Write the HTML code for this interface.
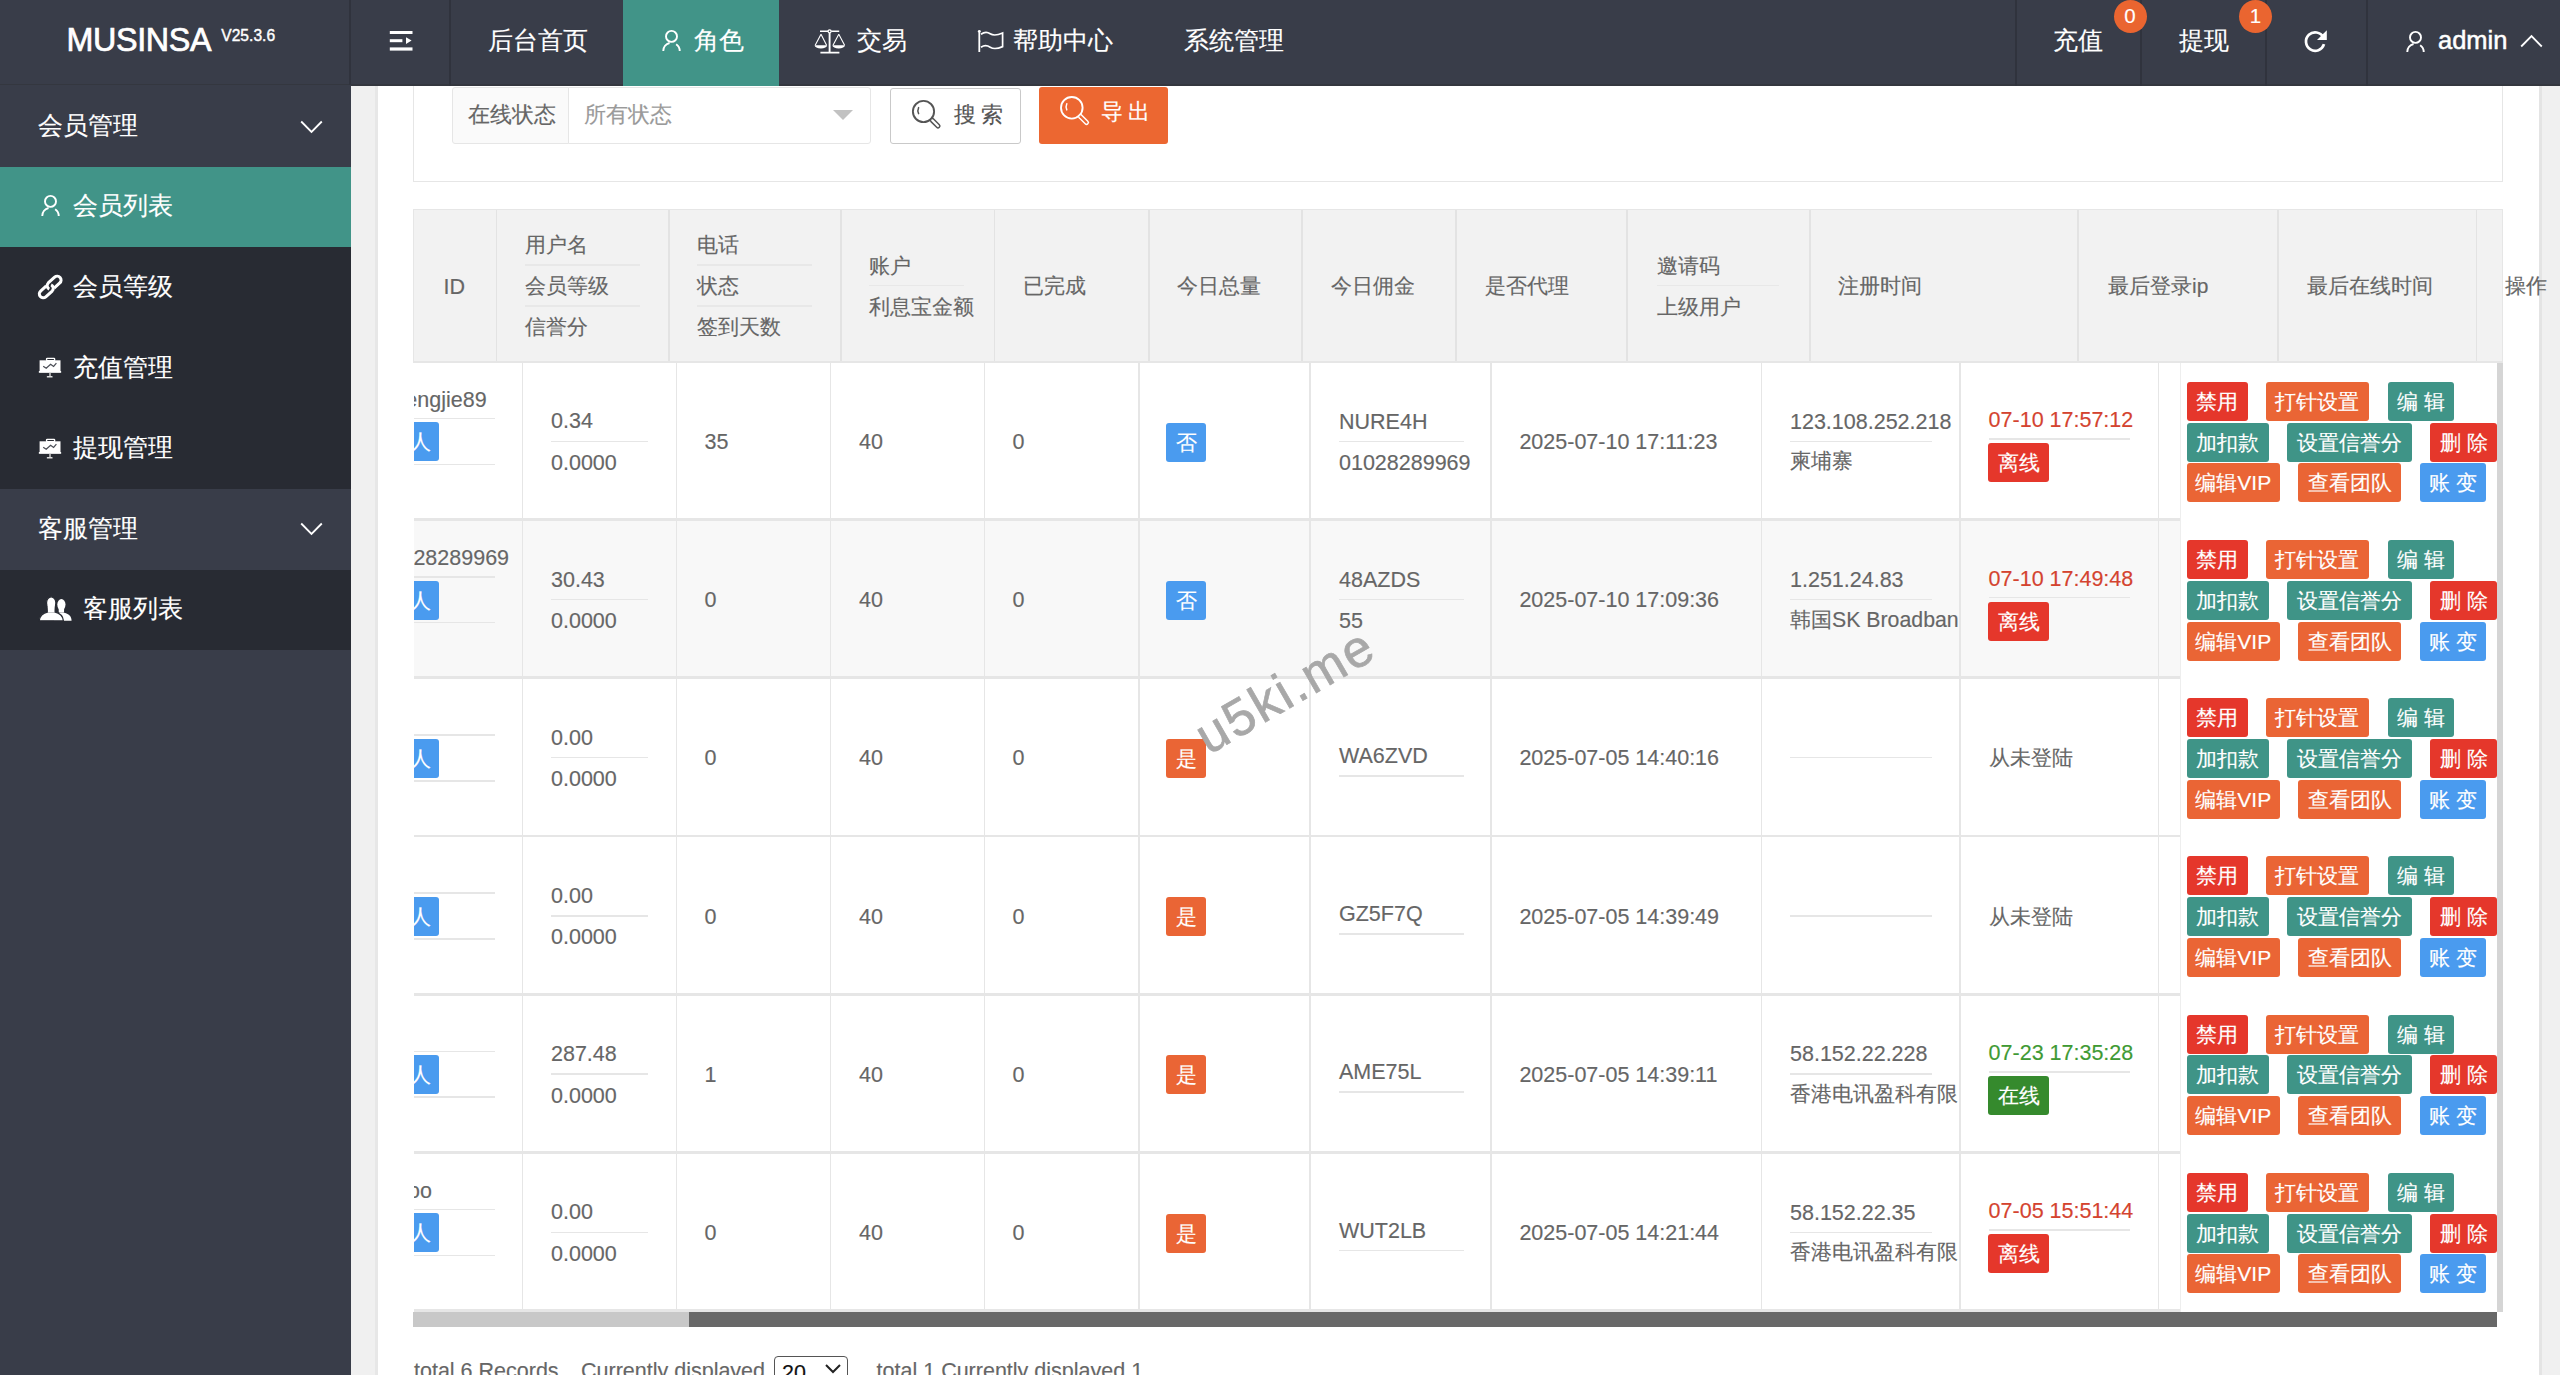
<!DOCTYPE html><html><head><meta charset="utf-8"><style>
html,body{margin:0;padding:0}
body{width:2560px;height:1375px;overflow:hidden;position:relative;background:#fff;font-family:'Liberation Sans',sans-serif}
.t{position:absolute;white-space:nowrap;-webkit-text-stroke:0.15px}
.r{position:absolute}
svg{position:absolute;overflow:visible}
.btn{position:absolute;height:39px;line-height:40px;-webkit-text-stroke:0.15px;font-size:21px;color:#fff;border-radius:3px;text-align:center;white-space:nowrap}
</style></head><body>
<div class="r" style="left:351.00px;top:85.00px;width:2209.00px;height:1290.00px;background:#f0f0f0;"></div>
<div class="r" style="left:378.00px;top:85.00px;width:2161.00px;height:1290.00px;background:#fff;"></div>
<div class="r" style="left:375.00px;top:85.00px;width:3.00px;height:1290.00px;background:#e7e7e7;"></div>
<div class="r" style="left:2539.00px;top:85.00px;width:3.00px;height:1290.00px;background:#e4e4e4;"></div>
<div class="r" style="left:413.00px;top:40.00px;width:2090.00px;height:141.50px;background:#fff;box-sizing:border-box;border:1.5px solid #e6e6e6;"></div>
<div class="r" style="left:452.00px;top:87.00px;width:117.00px;height:56.50px;background:#fafafa;box-sizing:border-box;border:1.5px solid #e6e6e6;border-radius:3px 0 0 3px;"></div>
<div class="r" style="left:567.50px;top:87.00px;width:303.50px;height:56.50px;background:#fff;box-sizing:border-box;border:1.5px solid #e6e6e6;border-radius:0 3px 3px 0;"></div>
<div class="t" style="left:468.0px;top:104.38px;font-size:21.6px;line-height:21.6px;color:#666;">在线状态</div>
<div class="t" style="left:584.0px;top:104.38px;font-size:21.6px;line-height:21.6px;color:#9a9a9a;">所有状态</div>
<svg style="left:833px;top:110px" width="20" height="10"><path d="M0 0 L20 0 L10 10 Z" fill="#c2c2c2"/></svg>
<div class="r" style="left:890.00px;top:87.50px;width:131.00px;height:56.00px;background:#fff;box-sizing:border-box;border:1.5px solid #c9c9c9;border-radius:3px;"></div>
<svg style="left:911px;top:99px" width="30" height="30" viewBox="0 0 30 30"><circle cx="12.5" cy="12.5" r="10.6" fill="none" stroke="#555" stroke-width="1.9"/><path d="M7.6 8.6 Q6.2 11.5 7.6 14.6" fill="none" stroke="#555" stroke-width="1.5" stroke-linecap="round"/><path d="M21.3 21.3 L27 27" stroke="#555" stroke-width="5.2" stroke-linecap="round"/><path d="M21.3 21.3 L27 27" stroke="#fff" stroke-width="2.2" stroke-linecap="round"/></svg>
<div class="t" style="left:953.5px;top:104.38px;font-size:21.6px;line-height:21.6px;color:#555;">搜 索</div>
<div class="r" style="left:1039.00px;top:87.00px;width:129.00px;height:56.50px;background:#ec6731;border-radius:3px;"></div>
<svg style="left:1059px;top:95px" width="31" height="31" viewBox="0 0 31 31"><circle cx="12.8" cy="12.8" r="10.8" fill="none" stroke="#fff" stroke-width="1.9"/><path d="M7.8 8.8 Q6.4 11.8 7.8 14.9" fill="none" stroke="#fff" stroke-width="1.5" stroke-linecap="round"/><path d="M21.5 21.5 L27.5 27.5" stroke="#fff" stroke-width="5.2" stroke-linecap="round"/><path d="M21.5 21.5 L27.5 27.5" stroke="#ec6731" stroke-width="2.2" stroke-linecap="round"/></svg>
<div class="t" style="left:1100.5px;top:101.38px;font-size:21.6px;line-height:21.6px;color:#fff;">导 出</div>
<div class="r" style="left:413.00px;top:209.00px;width:2090.00px;height:154.00px;background:#f2f2f2;box-sizing:border-box;border:1.5px solid #e6e6e6;border-bottom:2.5px solid #e6e6e6;"></div>
<div class="r" style="left:495.75px;top:210.00px;width:1.50px;height:151.00px;background:#e3e3e3;"></div>
<div class="r" style="left:668.25px;top:210.00px;width:1.50px;height:151.00px;background:#e3e3e3;"></div>
<div class="r" style="left:840.25px;top:210.00px;width:1.50px;height:151.00px;background:#e3e3e3;"></div>
<div class="r" style="left:993.75px;top:210.00px;width:1.50px;height:151.00px;background:#e3e3e3;"></div>
<div class="r" style="left:1148.25px;top:210.00px;width:1.50px;height:151.00px;background:#e3e3e3;"></div>
<div class="r" style="left:1301.25px;top:210.00px;width:1.50px;height:151.00px;background:#e3e3e3;"></div>
<div class="r" style="left:1455.25px;top:210.00px;width:1.50px;height:151.00px;background:#e3e3e3;"></div>
<div class="r" style="left:1626.25px;top:210.00px;width:1.50px;height:151.00px;background:#e3e3e3;"></div>
<div class="r" style="left:1809.25px;top:210.00px;width:1.50px;height:151.00px;background:#e3e3e3;"></div>
<div class="r" style="left:2077.25px;top:210.00px;width:1.50px;height:151.00px;background:#e3e3e3;"></div>
<div class="r" style="left:2277.25px;top:210.00px;width:1.50px;height:151.00px;background:#e3e3e3;"></div>
<div class="r" style="left:2475.75px;top:210.00px;width:1.50px;height:151.00px;background:#e3e3e3;"></div>
<div class="t" style="left:443.5px;top:276.74px;font-size:21.5px;line-height:21.5px;color:#666;">ID</div>
<div class="t" style="left:525.0px;top:233.69px;font-size:21px;line-height:21px;color:#666;">用户名</div>
<div class="t" style="left:525.0px;top:275.19px;font-size:21px;line-height:21px;color:#666;">会员等级</div>
<div class="t" style="left:525.0px;top:316.19px;font-size:21px;line-height:21px;color:#666;">信誉分</div>
<div class="r" style="left:525.00px;top:264.25px;width:115.00px;height:1.25px;background:#e8e8e8;"></div>
<div class="r" style="left:525.00px;top:305.25px;width:115.00px;height:1.25px;background:#e8e8e8;"></div>
<div class="t" style="left:697.0px;top:233.69px;font-size:21px;line-height:21px;color:#666;">电话</div>
<div class="t" style="left:697.0px;top:275.19px;font-size:21px;line-height:21px;color:#666;">状态</div>
<div class="t" style="left:697.0px;top:316.19px;font-size:21px;line-height:21px;color:#666;">签到天数</div>
<div class="r" style="left:697.00px;top:264.25px;width:115.00px;height:1.25px;background:#e8e8e8;"></div>
<div class="r" style="left:697.00px;top:305.25px;width:115.00px;height:1.25px;background:#e8e8e8;"></div>
<div class="t" style="left:869.0px;top:254.69px;font-size:21px;line-height:21px;color:#666;">账户</div>
<div class="t" style="left:869.0px;top:295.69px;font-size:21px;line-height:21px;color:#666;">利息宝金额</div>
<div class="r" style="left:869.00px;top:284.75px;width:95.00px;height:1.25px;background:#e8e8e8;"></div>
<div class="t" style="left:1023.0px;top:275.19px;font-size:21px;line-height:21px;color:#666;">已完成</div>
<div class="t" style="left:1177.0px;top:275.19px;font-size:21px;line-height:21px;color:#666;">今日总量</div>
<div class="t" style="left:1331.0px;top:275.19px;font-size:21px;line-height:21px;color:#666;">今日佣金</div>
<div class="t" style="left:1485.0px;top:275.19px;font-size:21px;line-height:21px;color:#666;">是否代理</div>
<div class="t" style="left:1657.0px;top:254.69px;font-size:21px;line-height:21px;color:#666;">邀请码</div>
<div class="t" style="left:1657.0px;top:295.69px;font-size:21px;line-height:21px;color:#666;">上级用户</div>
<div class="r" style="left:1657.00px;top:284.75px;width:122.00px;height:1.25px;background:#e8e8e8;"></div>
<div class="t" style="left:1838.0px;top:275.19px;font-size:21px;line-height:21px;color:#666;">注册时间</div>
<div class="t" style="left:2108.0px;top:275.19px;font-size:21px;line-height:21px;color:#666;">最后登录ip</div>
<div class="t" style="left:2307.0px;top:275.19px;font-size:21px;line-height:21px;color:#666;">最后在线时间</div>
<div class="t" style="left:2505.0px;top:275.19px;font-size:21px;line-height:21px;color:#666;">操作</div>
<div style="position:absolute;left:414px;top:363px;width:1766px;height:949px;overflow:hidden">
<div class="r" style="left:0.00px;top:155.20px;width:1766.00px;height:2.80px;background:#e6e6e6;"></div>
<div class="t" style="left:-8.7px;top:26.54px;font-size:21.5px;line-height:21.5px;color:#666;">engjie89</div>
<div class="r" style="left:0.00px;top:54.80px;width:80.50px;height:1.50px;background:#e6e6e6;"></div>
<div class="btn" style="left:-114.0px;top:59.30px;width:130.8px;padding-right:8.5px;text-align:right;background:#4a9bef">普通人</div>
<div class="r" style="left:0.00px;top:100.60px;width:80.50px;height:1.50px;background:#e6e6e6;"></div>
<div class="t" style="left:137.0px;top:48.34px;font-size:21.5px;line-height:21.5px;color:#666;">0.34</div>
<div class="r" style="left:137.00px;top:77.50px;width:97.00px;height:1.50px;background:#e6e6e6;"></div>
<div class="t" style="left:137.0px;top:89.73px;font-size:21.5px;line-height:21.5px;color:#666;">0.0000</div>
<div class="t" style="left:290.5px;top:69.04px;font-size:21.5px;line-height:21.5px;color:#666;">35</div>
<div class="t" style="left:445.0px;top:69.04px;font-size:21.5px;line-height:21.5px;color:#666;">40</div>
<div class="t" style="left:598.5px;top:69.04px;font-size:21.5px;line-height:21.5px;color:#666;">0</div>
<div class="btn" style="left:752.0px;top:59.50px;width:40px;background:#4a9bef">否</div>
<div class="t" style="left:925.0px;top:48.54px;font-size:21.5px;line-height:21.5px;color:#666;">NURE4H</div>
<div class="r" style="left:925.00px;top:77.50px;width:124.50px;height:1.50px;background:#e6e6e6;"></div>
<div class="t" style="left:925.0px;top:89.84px;font-size:21.5px;line-height:21.5px;color:#666;">01028289969</div>
<div class="t" style="left:1105.4px;top:69.04px;font-size:21.5px;line-height:21.5px;color:#666;">2025-07-10 17:11:23</div>
<div class="t" style="left:1376.0px;top:48.54px;font-size:21.5px;line-height:21.5px;color:#666;">123.108.252.218</div>
<div class="r" style="left:1376.00px;top:77.50px;width:142.00px;height:1.50px;background:#e6e6e6;"></div>
<div style="position:absolute;left:1376px;top:78.30000000000001px;width:168.5999999999999px;height:40px;overflow:hidden">
<div class="t" style="left:0.0px;top:10.04px;font-size:21.3px;line-height:21.3px;color:#666;">柬埔寨</div>
</div>
<div class="t" style="left:1574.6px;top:47.34px;font-size:21.5px;line-height:21.5px;color:#d4432f;">07-10 17:57:12</div>
<div class="r" style="left:1574.60px;top:75.30px;width:141.40px;height:1.50px;background:#e6e6e6;"></div>
<div class="btn" style="left:1574.0px;top:80.30px;width:61px;background:#e5372b">离线</div>
<div class="r" style="left:0.00px;top:158.20px;width:1766.00px;height:155.70px;background:#f8f8f8;"></div>
<div class="r" style="left:0.00px;top:313.40px;width:1766.00px;height:2.80px;background:#e6e6e6;"></div>
<div class="t" style="left:-0.6px;top:184.73px;font-size:21.5px;line-height:21.5px;color:#666;">28289969</div>
<div class="r" style="left:0.00px;top:213.00px;width:80.50px;height:1.50px;background:#e6e6e6;"></div>
<div class="btn" style="left:-114.0px;top:217.50px;width:130.8px;padding-right:8.5px;text-align:right;background:#4a9bef">普通人</div>
<div class="r" style="left:0.00px;top:258.80px;width:80.50px;height:1.50px;background:#e6e6e6;"></div>
<div class="t" style="left:137.0px;top:206.53px;font-size:21.5px;line-height:21.5px;color:#666;">30.43</div>
<div class="r" style="left:137.00px;top:235.70px;width:97.00px;height:1.50px;background:#e6e6e6;"></div>
<div class="t" style="left:137.0px;top:247.94px;font-size:21.5px;line-height:21.5px;color:#666;">0.0000</div>
<div class="t" style="left:290.5px;top:227.23px;font-size:21.5px;line-height:21.5px;color:#666;">0</div>
<div class="t" style="left:445.0px;top:227.23px;font-size:21.5px;line-height:21.5px;color:#666;">40</div>
<div class="t" style="left:598.5px;top:227.23px;font-size:21.5px;line-height:21.5px;color:#666;">0</div>
<div class="btn" style="left:752.0px;top:217.70px;width:40px;background:#4a9bef">否</div>
<div class="t" style="left:925.0px;top:206.73px;font-size:21.5px;line-height:21.5px;color:#666;">48AZDS</div>
<div class="r" style="left:925.00px;top:235.70px;width:124.50px;height:1.50px;background:#e6e6e6;"></div>
<div class="t" style="left:925.0px;top:248.03px;font-size:21.5px;line-height:21.5px;color:#666;">55</div>
<div class="t" style="left:1105.4px;top:227.23px;font-size:21.5px;line-height:21.5px;color:#666;">2025-07-10 17:09:36</div>
<div class="t" style="left:1376.0px;top:206.73px;font-size:21.5px;line-height:21.5px;color:#666;">1.251.24.83</div>
<div class="r" style="left:1376.00px;top:235.70px;width:142.00px;height:1.50px;background:#e6e6e6;"></div>
<div style="position:absolute;left:1376px;top:236.5px;width:168.5999999999999px;height:40px;overflow:hidden">
<div class="t" style="left:0.0px;top:10.04px;font-size:21.3px;line-height:21.3px;color:#666;">韩国SK Broadband</div>
</div>
<div class="t" style="left:1574.6px;top:205.53px;font-size:21.5px;line-height:21.5px;color:#d4432f;">07-10 17:49:48</div>
<div class="r" style="left:1574.60px;top:233.50px;width:141.40px;height:1.50px;background:#e6e6e6;"></div>
<div class="btn" style="left:1574.0px;top:238.50px;width:61px;background:#e5372b">离线</div>
<div class="r" style="left:0.00px;top:471.60px;width:1766.00px;height:2.80px;background:#e6e6e6;"></div>
<div class="r" style="left:0.00px;top:371.20px;width:80.50px;height:1.50px;background:#e6e6e6;"></div>
<div class="btn" style="left:-114.0px;top:375.70px;width:130.8px;padding-right:8.5px;text-align:right;background:#4a9bef">普通人</div>
<div class="r" style="left:0.00px;top:417.00px;width:80.50px;height:1.50px;background:#e6e6e6;"></div>
<div class="t" style="left:137.0px;top:364.74px;font-size:21.5px;line-height:21.5px;color:#666;">0.00</div>
<div class="r" style="left:137.00px;top:393.90px;width:97.00px;height:1.50px;background:#e6e6e6;"></div>
<div class="t" style="left:137.0px;top:406.14px;font-size:21.5px;line-height:21.5px;color:#666;">0.0000</div>
<div class="t" style="left:290.5px;top:385.44px;font-size:21.5px;line-height:21.5px;color:#666;">0</div>
<div class="t" style="left:445.0px;top:385.44px;font-size:21.5px;line-height:21.5px;color:#666;">40</div>
<div class="t" style="left:598.5px;top:385.44px;font-size:21.5px;line-height:21.5px;color:#666;">0</div>
<div class="btn" style="left:752.0px;top:375.90px;width:40px;background:#ea6535">是</div>
<div class="t" style="left:925.0px;top:382.94px;font-size:21.5px;line-height:21.5px;color:#666;">WA6ZVD</div>
<div class="r" style="left:925.00px;top:412.00px;width:124.50px;height:1.50px;background:#e6e6e6;"></div>
<div class="t" style="left:1105.4px;top:385.44px;font-size:21.5px;line-height:21.5px;color:#666;">2025-07-05 14:40:16</div>
<div class="r" style="left:1376.00px;top:393.90px;width:142.00px;height:1.50px;background:#e6e6e6;"></div>
<div class="t" style="left:1575.0px;top:384.39px;font-size:21px;line-height:21px;color:#666;">从未登陆</div>
<div class="r" style="left:0.00px;top:629.80px;width:1766.00px;height:2.80px;background:#e6e6e6;"></div>
<div class="r" style="left:0.00px;top:529.40px;width:80.50px;height:1.50px;background:#e6e6e6;"></div>
<div class="btn" style="left:-114.0px;top:533.90px;width:130.8px;padding-right:8.5px;text-align:right;background:#4a9bef">普通人</div>
<div class="r" style="left:0.00px;top:575.20px;width:80.50px;height:1.50px;background:#e6e6e6;"></div>
<div class="t" style="left:137.0px;top:522.93px;font-size:21.5px;line-height:21.5px;color:#666;">0.00</div>
<div class="r" style="left:137.00px;top:552.10px;width:97.00px;height:1.50px;background:#e6e6e6;"></div>
<div class="t" style="left:137.0px;top:564.34px;font-size:21.5px;line-height:21.5px;color:#666;">0.0000</div>
<div class="t" style="left:290.5px;top:543.63px;font-size:21.5px;line-height:21.5px;color:#666;">0</div>
<div class="t" style="left:445.0px;top:543.63px;font-size:21.5px;line-height:21.5px;color:#666;">40</div>
<div class="t" style="left:598.5px;top:543.63px;font-size:21.5px;line-height:21.5px;color:#666;">0</div>
<div class="btn" style="left:752.0px;top:534.10px;width:40px;background:#ea6535">是</div>
<div class="t" style="left:925.0px;top:541.13px;font-size:21.5px;line-height:21.5px;color:#666;">GZ5F7Q</div>
<div class="r" style="left:925.00px;top:570.20px;width:124.50px;height:1.50px;background:#e6e6e6;"></div>
<div class="t" style="left:1105.4px;top:543.63px;font-size:21.5px;line-height:21.5px;color:#666;">2025-07-05 14:39:49</div>
<div class="r" style="left:1376.00px;top:552.10px;width:142.00px;height:1.50px;background:#e6e6e6;"></div>
<div class="t" style="left:1575.0px;top:542.59px;font-size:21px;line-height:21px;color:#666;">从未登陆</div>
<div class="r" style="left:0.00px;top:788.00px;width:1766.00px;height:2.80px;background:#e6e6e6;"></div>
<div class="r" style="left:0.00px;top:687.60px;width:80.50px;height:1.50px;background:#e6e6e6;"></div>
<div class="btn" style="left:-114.0px;top:692.10px;width:130.8px;padding-right:8.5px;text-align:right;background:#4a9bef">普通人</div>
<div class="r" style="left:0.00px;top:733.40px;width:80.50px;height:1.50px;background:#e6e6e6;"></div>
<div class="t" style="left:137.0px;top:681.13px;font-size:21.5px;line-height:21.5px;color:#666;">287.48</div>
<div class="r" style="left:137.00px;top:710.30px;width:97.00px;height:1.50px;background:#e6e6e6;"></div>
<div class="t" style="left:137.0px;top:722.53px;font-size:21.5px;line-height:21.5px;color:#666;">0.0000</div>
<div class="t" style="left:290.5px;top:701.83px;font-size:21.5px;line-height:21.5px;color:#666;">1</div>
<div class="t" style="left:445.0px;top:701.83px;font-size:21.5px;line-height:21.5px;color:#666;">40</div>
<div class="t" style="left:598.5px;top:701.83px;font-size:21.5px;line-height:21.5px;color:#666;">0</div>
<div class="btn" style="left:752.0px;top:692.30px;width:40px;background:#ea6535">是</div>
<div class="t" style="left:925.0px;top:699.33px;font-size:21.5px;line-height:21.5px;color:#666;">AME75L</div>
<div class="r" style="left:925.00px;top:728.40px;width:124.50px;height:1.50px;background:#e6e6e6;"></div>
<div class="t" style="left:1105.4px;top:701.83px;font-size:21.5px;line-height:21.5px;color:#666;">2025-07-05 14:39:11</div>
<div class="t" style="left:1376.0px;top:681.33px;font-size:21.5px;line-height:21.5px;color:#666;">58.152.22.228</div>
<div class="r" style="left:1376.00px;top:710.30px;width:142.00px;height:1.50px;background:#e6e6e6;"></div>
<div style="position:absolute;left:1376px;top:711.0999999999999px;width:168.5999999999999px;height:40px;overflow:hidden">
<div class="t" style="left:0.0px;top:10.04px;font-size:21.3px;line-height:21.3px;color:#666;">香港电讯盈科有限</div>
</div>
<div class="t" style="left:1574.6px;top:680.13px;font-size:21.5px;line-height:21.5px;color:#3f9a34;">07-23 17:35:28</div>
<div class="r" style="left:1574.60px;top:708.10px;width:141.40px;height:1.50px;background:#e6e6e6;"></div>
<div class="btn" style="left:1574.0px;top:713.10px;width:61px;background:#358a2d">在线</div>
<div class="r" style="left:0.00px;top:946.20px;width:1766.00px;height:2.80px;background:#e6e6e6;"></div>
<div class="t" style="left:-5.9px;top:817.53px;font-size:21.5px;line-height:21.5px;color:#666;">oo</div>
<div class="r" style="left:0.00px;top:845.80px;width:80.50px;height:1.50px;background:#e6e6e6;"></div>
<div class="btn" style="left:-114.0px;top:850.30px;width:130.8px;padding-right:8.5px;text-align:right;background:#4a9bef">普通人</div>
<div class="r" style="left:0.00px;top:891.60px;width:80.50px;height:1.50px;background:#e6e6e6;"></div>
<div class="t" style="left:137.0px;top:839.33px;font-size:21.5px;line-height:21.5px;color:#666;">0.00</div>
<div class="r" style="left:137.00px;top:868.50px;width:97.00px;height:1.50px;background:#e6e6e6;"></div>
<div class="t" style="left:137.0px;top:880.74px;font-size:21.5px;line-height:21.5px;color:#666;">0.0000</div>
<div class="t" style="left:290.5px;top:860.03px;font-size:21.5px;line-height:21.5px;color:#666;">0</div>
<div class="t" style="left:445.0px;top:860.03px;font-size:21.5px;line-height:21.5px;color:#666;">40</div>
<div class="t" style="left:598.5px;top:860.03px;font-size:21.5px;line-height:21.5px;color:#666;">0</div>
<div class="btn" style="left:752.0px;top:850.50px;width:40px;background:#ea6535">是</div>
<div class="t" style="left:925.0px;top:857.53px;font-size:21.5px;line-height:21.5px;color:#666;">WUT2LB</div>
<div class="r" style="left:925.00px;top:886.60px;width:124.50px;height:1.50px;background:#e6e6e6;"></div>
<div class="t" style="left:1105.4px;top:860.03px;font-size:21.5px;line-height:21.5px;color:#666;">2025-07-05 14:21:44</div>
<div class="t" style="left:1376.0px;top:839.53px;font-size:21.5px;line-height:21.5px;color:#666;">58.152.22.35</div>
<div class="r" style="left:1376.00px;top:868.50px;width:142.00px;height:1.50px;background:#e6e6e6;"></div>
<div style="position:absolute;left:1376px;top:869.3px;width:168.5999999999999px;height:40px;overflow:hidden">
<div class="t" style="left:0.0px;top:10.04px;font-size:21.3px;line-height:21.3px;color:#666;">香港电讯盈科有限</div>
</div>
<div class="t" style="left:1574.6px;top:838.33px;font-size:21.5px;line-height:21.5px;color:#d4432f;">07-05 15:51:44</div>
<div class="r" style="left:1574.60px;top:866.30px;width:141.40px;height:1.50px;background:#e6e6e6;"></div>
<div class="btn" style="left:1574.0px;top:871.30px;width:61px;background:#e5372b">离线</div>
<div class="r" style="left:107.95px;top:0.00px;width:1.50px;height:949.00px;background:#e6e6e6;"></div>
<div class="r" style="left:261.85px;top:0.00px;width:1.50px;height:949.00px;background:#e6e6e6;"></div>
<div class="r" style="left:415.85px;top:0.00px;width:1.50px;height:949.00px;background:#e6e6e6;"></div>
<div class="r" style="left:569.75px;top:0.00px;width:1.50px;height:949.00px;background:#e6e6e6;"></div>
<div class="r" style="left:724.05px;top:0.00px;width:1.50px;height:949.00px;background:#e6e6e6;"></div>
<div class="r" style="left:895.25px;top:0.00px;width:1.50px;height:949.00px;background:#e6e6e6;"></div>
<div class="r" style="left:1076.05px;top:0.00px;width:1.50px;height:949.00px;background:#e6e6e6;"></div>
<div class="r" style="left:1346.65px;top:0.00px;width:1.50px;height:949.00px;background:#e6e6e6;"></div>
<div class="r" style="left:1545.45px;top:0.00px;width:1.50px;height:949.00px;background:#e6e6e6;"></div>
<div class="r" style="left:1743.85px;top:0.00px;width:1.50px;height:949.00px;background:#e6e6e6;"></div>
</div>
<div class="r" style="left:2180.00px;top:363.00px;width:323.00px;height:949.00px;background:#fff;"></div>
<div class="r" style="left:2180.00px;top:363.00px;width:1.00px;height:949.00px;background:#eeeeee;"></div>
<div class="r" style="left:2497.00px;top:363.00px;width:6.00px;height:949.00px;background:#d5d5d5;"></div>
<div class="btn" style="left:2187px;top:381.80px;width:60.6px;background:#e5372b">禁用</div>
<div class="btn" style="left:2265.7px;top:381.80px;width:103px;background:#ea6535">打针设置</div>
<div class="btn" style="left:2387.6px;top:381.80px;width:66.4px;background:#3f9487">编 辑</div>
<div class="btn" style="left:2187px;top:422.60px;width:81.6px;background:#3f9487">加扣款</div>
<div class="btn" style="left:2286.8px;top:422.60px;width:125px;background:#3f9487">设置信誉分</div>
<div class="btn" style="left:2430.4px;top:422.60px;width:66.6px;background:#e5372b">删 除</div>
<div class="btn" style="left:2187px;top:463.40px;width:92.5px;background:#ea6535">编辑VIP</div>
<div class="btn" style="left:2298px;top:463.40px;width:103.4px;background:#ea6535">查看团队</div>
<div class="btn" style="left:2419.5px;top:463.40px;width:66.5px;background:#4a9bef">账 变</div>
<div class="btn" style="left:2187px;top:540.00px;width:60.6px;background:#e5372b">禁用</div>
<div class="btn" style="left:2265.7px;top:540.00px;width:103px;background:#ea6535">打针设置</div>
<div class="btn" style="left:2387.6px;top:540.00px;width:66.4px;background:#3f9487">编 辑</div>
<div class="btn" style="left:2187px;top:580.80px;width:81.6px;background:#3f9487">加扣款</div>
<div class="btn" style="left:2286.8px;top:580.80px;width:125px;background:#3f9487">设置信誉分</div>
<div class="btn" style="left:2430.4px;top:580.80px;width:66.6px;background:#e5372b">删 除</div>
<div class="btn" style="left:2187px;top:621.60px;width:92.5px;background:#ea6535">编辑VIP</div>
<div class="btn" style="left:2298px;top:621.60px;width:103.4px;background:#ea6535">查看团队</div>
<div class="btn" style="left:2419.5px;top:621.60px;width:66.5px;background:#4a9bef">账 变</div>
<div class="btn" style="left:2187px;top:698.20px;width:60.6px;background:#e5372b">禁用</div>
<div class="btn" style="left:2265.7px;top:698.20px;width:103px;background:#ea6535">打针设置</div>
<div class="btn" style="left:2387.6px;top:698.20px;width:66.4px;background:#3f9487">编 辑</div>
<div class="btn" style="left:2187px;top:739.00px;width:81.6px;background:#3f9487">加扣款</div>
<div class="btn" style="left:2286.8px;top:739.00px;width:125px;background:#3f9487">设置信誉分</div>
<div class="btn" style="left:2430.4px;top:739.00px;width:66.6px;background:#e5372b">删 除</div>
<div class="btn" style="left:2187px;top:779.80px;width:92.5px;background:#ea6535">编辑VIP</div>
<div class="btn" style="left:2298px;top:779.80px;width:103.4px;background:#ea6535">查看团队</div>
<div class="btn" style="left:2419.5px;top:779.80px;width:66.5px;background:#4a9bef">账 变</div>
<div class="btn" style="left:2187px;top:856.40px;width:60.6px;background:#e5372b">禁用</div>
<div class="btn" style="left:2265.7px;top:856.40px;width:103px;background:#ea6535">打针设置</div>
<div class="btn" style="left:2387.6px;top:856.40px;width:66.4px;background:#3f9487">编 辑</div>
<div class="btn" style="left:2187px;top:897.20px;width:81.6px;background:#3f9487">加扣款</div>
<div class="btn" style="left:2286.8px;top:897.20px;width:125px;background:#3f9487">设置信誉分</div>
<div class="btn" style="left:2430.4px;top:897.20px;width:66.6px;background:#e5372b">删 除</div>
<div class="btn" style="left:2187px;top:938.00px;width:92.5px;background:#ea6535">编辑VIP</div>
<div class="btn" style="left:2298px;top:938.00px;width:103.4px;background:#ea6535">查看团队</div>
<div class="btn" style="left:2419.5px;top:938.00px;width:66.5px;background:#4a9bef">账 变</div>
<div class="btn" style="left:2187px;top:1014.60px;width:60.6px;background:#e5372b">禁用</div>
<div class="btn" style="left:2265.7px;top:1014.60px;width:103px;background:#ea6535">打针设置</div>
<div class="btn" style="left:2387.6px;top:1014.60px;width:66.4px;background:#3f9487">编 辑</div>
<div class="btn" style="left:2187px;top:1055.40px;width:81.6px;background:#3f9487">加扣款</div>
<div class="btn" style="left:2286.8px;top:1055.40px;width:125px;background:#3f9487">设置信誉分</div>
<div class="btn" style="left:2430.4px;top:1055.40px;width:66.6px;background:#e5372b">删 除</div>
<div class="btn" style="left:2187px;top:1096.20px;width:92.5px;background:#ea6535">编辑VIP</div>
<div class="btn" style="left:2298px;top:1096.20px;width:103.4px;background:#ea6535">查看团队</div>
<div class="btn" style="left:2419.5px;top:1096.20px;width:66.5px;background:#4a9bef">账 变</div>
<div class="btn" style="left:2187px;top:1172.80px;width:60.6px;background:#e5372b">禁用</div>
<div class="btn" style="left:2265.7px;top:1172.80px;width:103px;background:#ea6535">打针设置</div>
<div class="btn" style="left:2387.6px;top:1172.80px;width:66.4px;background:#3f9487">编 辑</div>
<div class="btn" style="left:2187px;top:1213.60px;width:81.6px;background:#3f9487">加扣款</div>
<div class="btn" style="left:2286.8px;top:1213.60px;width:125px;background:#3f9487">设置信誉分</div>
<div class="btn" style="left:2430.4px;top:1213.60px;width:66.6px;background:#e5372b">删 除</div>
<div class="btn" style="left:2187px;top:1254.40px;width:92.5px;background:#ea6535">编辑VIP</div>
<div class="btn" style="left:2298px;top:1254.40px;width:103.4px;background:#ea6535">查看团队</div>
<div class="btn" style="left:2419.5px;top:1254.40px;width:66.5px;background:#4a9bef">账 变</div>
<div class="r" style="left:413.00px;top:1312.00px;width:276.00px;height:15.00px;background:#c8c8c8;"></div>
<div class="r" style="left:689.00px;top:1312.00px;width:1808.00px;height:15.00px;background:#686868;"></div>
<div class="t" style="left:414.0px;top:1360.54px;font-size:21.5px;line-height:21.5px;color:#666;">total 6 Records</div>
<div class="t" style="left:581.0px;top:1360.54px;font-size:21.5px;line-height:21.5px;color:#666;">Currently displayed</div>
<div class="r" style="left:773.50px;top:1356.00px;width:74.50px;height:44.00px;background:#fff;box-sizing:border-box;border:1.5px solid #555;border-radius:4px;"></div>
<div class="t" style="left:782.0px;top:1363.04px;font-size:21.5px;line-height:21.5px;color:#111;">20</div>
<svg style="left:825px;top:1364px" width="16" height="10"><path d="M1 1 L8 8 L15 1" fill="none" stroke="#222" stroke-width="2"/></svg>
<div class="t" style="left:876.6px;top:1360.54px;font-size:21.5px;line-height:21.5px;color:#666;">total 1 Currently displayed 1 .</div>
<div class="t" style="left:1213px;top:709px;font-size:52px;line-height:54px;letter-spacing:2.2px;font-weight:normal;color:#a8a8a8;-webkit-text-stroke:0.7px #a8a8a8;transform:rotate(-30deg);transform-origin:0 100%">u5ki.me</div>
<div class="r" style="left:0.00px;top:0.00px;width:2560.00px;height:85.60px;background:#393d49;"></div>
<div class="r" style="left:0.00px;top:84.00px;width:2560.00px;height:1.60px;background:#34373f;"></div>
<div class="r" style="left:623.00px;top:0.00px;width:156.00px;height:85.60px;background:#419488;"></div>
<div class="r" style="left:349.00px;top:0.00px;width:2.00px;height:85.60px;background:#30333d;"></div>
<div class="r" style="left:449.00px;top:0.00px;width:2.00px;height:85.60px;background:#30333d;"></div>
<div class="r" style="left:2015.00px;top:0.00px;width:2.00px;height:85.60px;background:#30333d;"></div>
<div class="r" style="left:2140.00px;top:0.00px;width:2.00px;height:85.60px;background:#30333d;"></div>
<div class="r" style="left:2265.00px;top:0.00px;width:2.00px;height:85.60px;background:#30333d;"></div>
<div class="r" style="left:2366.00px;top:0.00px;width:2.00px;height:85.60px;background:#30333d;"></div>
<div class="t" style="left:66.5px;top:24.03px;font-size:32.3px;line-height:32.3px;color:#fff;letter-spacing:-0.35px;-webkit-text-stroke:0.7px #fff">MUSINSA</div>
<div class="t" style="left:221.3px;top:28.24px;font-size:15.6px;line-height:15.6px;color:#fff;-webkit-text-stroke:0.4px #fff">V25.3.6</div>
<svg style="left:389px;top:30px" width="25" height="22" viewBox="0 0 25 22"><rect x="0.8" y="1" width="22.7" height="3" fill="#fff"/><rect x="0.8" y="9.2" width="12.6" height="3" fill="#fff"/><path d="M17 7.2 L22.6 10.6 L17 14 Z" fill="#fff"/><rect x="0.8" y="17.4" width="22.7" height="3.2" fill="#fff"/></svg>
<div class="t" style="left:488.0px;top:27.75px;font-size:25px;line-height:25px;color:#fff;">后台首页</div>
<svg style="left:662px;top:30px" width="19" height="22" viewBox="0 0 18.5 22"><circle cx="9.25" cy="6.4" r="5.5" fill="none" stroke="#fff" stroke-width="1.9"/><path d="M1 21 A8.25 8.25 0 0 1 7.3 13" fill="none" stroke="#fff" stroke-width="1.9"/><path d="M13.9 14.2 A8.25 8.25 0 0 1 17.5 21" fill="none" stroke="#fff" stroke-width="1.9"/></svg>
<div class="t" style="left:694.0px;top:27.75px;font-size:25px;line-height:25px;color:#fff;">角色</div>
<svg style="left:806px;top:22px" width="40" height="38" viewBox="0 0 40 38"><circle cx="23.6" cy="9.3" r="1.5" fill="none" stroke="#fff" stroke-width="1.3"/><path d="M14 9.3 H22 M25.2 9.3 H33.2" stroke="#fff" stroke-width="1.6"/><path d="M23.6 10.8 V30.2 M14.4 30.6 H33.4" stroke="#fff" stroke-width="1.9"/><path d="M15 12.2 L9.2 23.3 M15 12.2 L20.6 23.3 M32.8 12.2 L27 23.3 M32.8 12.2 L38.6 23.3" stroke="#fff" stroke-width="1.1" fill="none"/><path d="M8.6 23.2 H21.2 A6.3 3.3 0 0 1 8.6 23.2 Z M26.4 23.2 H39 A6.3 3.3 0 0 1 26.4 23.2 Z" fill="#fff"/></svg>
<div class="t" style="left:857.0px;top:27.75px;font-size:25px;line-height:25px;color:#fff;">交易</div>
<svg style="left:976px;top:28px" width="30" height="26" viewBox="0 0 30 26"><circle cx="3.3" cy="3.3" r="1.4" fill="#fff"/><path d="M3.3 3.5 V24" stroke="#fff" stroke-width="1.8"/><path d="M5 6.2 C8.2 4 11.2 3.8 14.2 5.8 C17.6 8 21.2 7.4 26.6 5 V18.6 C21.2 21 17.6 21.4 14.2 19.2 C11.2 17.2 8.2 17 5 19.2" fill="none" stroke="#fff" stroke-width="1.7"/></svg>
<div class="t" style="left:1013.0px;top:27.75px;font-size:25px;line-height:25px;color:#fff;">帮助中心</div>
<div class="t" style="left:1184.0px;top:27.75px;font-size:25px;line-height:25px;color:#fff;">系统管理</div>
<div class="t" style="left:2053.0px;top:27.75px;font-size:25px;line-height:25px;color:#fff;">充值</div>
<div class="t" style="left:2179.0px;top:27.75px;font-size:25px;line-height:25px;color:#fff;">提现</div>
<div class="r" style="left:2113.5px;top:-0.5px;width:33px;height:33px;border-radius:50%;background:#ea6530"></div>
<div class="t" style="left:2124.2px;top:6.04px;font-size:20.5px;line-height:20.5px;color:#fff;">0</div>
<div class="r" style="left:2239.0px;top:-0.5px;width:33px;height:33px;border-radius:50%;background:#ea6530"></div>
<div class="t" style="left:2249.7px;top:6.04px;font-size:20.5px;line-height:20.5px;color:#fff;">1</div>
<svg style="left:2304px;top:29px" width="24" height="23" viewBox="0 0 24 23"><path d="M19.3 8.2 A9.2 9.2 0 1 0 20 15.2" fill="none" stroke="#fff" stroke-width="2.7"/><path d="M22.8 1.2 V11 H13 Z" fill="#fff"/></svg>
<svg style="left:2406px;top:30.5px" width="19" height="22" viewBox="0 0 18.5 22"><circle cx="9.25" cy="6.4" r="5.5" fill="none" stroke="#fff" stroke-width="1.9"/><path d="M1 21 A8.25 8.25 0 0 1 7.3 13" fill="none" stroke="#fff" stroke-width="1.9"/><path d="M13.9 14.2 A8.25 8.25 0 0 1 17.5 21" fill="none" stroke="#fff" stroke-width="1.9"/></svg>
<div class="t" style="left:2438.0px;top:28.49px;font-size:25.5px;line-height:25.5px;color:#fff;-webkit-text-stroke:0.5px #fff">admin</div>
<svg style="left:2520px;top:34px" width="23" height="14"><path d="M1.2 12.5 L11.5 2 L21.8 12.5" fill="none" stroke="#fff" stroke-width="1.8"/></svg>
<div class="r" style="left:0.00px;top:85.00px;width:351.00px;height:1290.00px;background:#393d49;"></div>
<div class="r" style="left:0.00px;top:166.50px;width:351.00px;height:80.00px;background:#419488;"></div>
<div class="r" style="left:0.00px;top:246.50px;width:351.00px;height:242.50px;background:#282b33;"></div>
<div class="r" style="left:0.00px;top:569.50px;width:351.00px;height:80.50px;background:#282b33;"></div>
<div class="t" style="left:38.0px;top:112.55px;font-size:25px;line-height:25px;color:#fff;">会员管理</div>
<div class="t" style="left:38.0px;top:515.75px;font-size:25px;line-height:25px;color:#fff;">客服管理</div>
<svg style="left:300px;top:119.5px" width="23" height="14"><path d="M1.2 1.5 L11.5 12 L21.8 1.5" fill="none" stroke="#fff" stroke-width="1.8"/></svg>
<svg style="left:300px;top:522px" width="23" height="14"><path d="M1.2 1.5 L11.5 12 L21.8 1.5" fill="none" stroke="#fff" stroke-width="1.8"/></svg>
<svg style="left:41px;top:195px" width="19" height="22" viewBox="0 0 18.5 22"><circle cx="9.25" cy="6.4" r="5.5" fill="none" stroke="#fff" stroke-width="1.9"/><path d="M1 21 A8.25 8.25 0 0 1 7.3 13" fill="none" stroke="#fff" stroke-width="1.9"/><path d="M13.9 14.2 A8.25 8.25 0 0 1 17.5 21" fill="none" stroke="#fff" stroke-width="1.9"/></svg>
<div class="t" style="left:73.0px;top:193.25px;font-size:25px;line-height:25px;color:#fff;">会员列表</div>
<svg style="left:30px;top:268px" width="40" height="38" viewBox="0 0 40 38"><g fill="none" stroke="#fff" stroke-width="3.6" stroke-linecap="butt" transform="translate(20.2 19) scale(0.84) translate(-20.05 -18.4)"><g transform="rotate(-42 15.5 23.2)"><path d="M19.5 18.6 H10.4 A4.6 4.6 0 0 0 10.4 27.8 H20.6 A4.6 4.6 0 0 0 24.6 21.5"/></g><g transform="rotate(-42 24.6 13.6)"><path d="M20.6 18.2 H29.7 A4.6 4.6 0 0 0 29.7 9 H19.5 A4.6 4.6 0 0 0 15.5 15.3"/></g></g></svg>
<div class="t" style="left:72.7px;top:274.25px;font-size:25px;line-height:25px;color:#fff;">会员等级</div>
<svg style="left:39px;top:357px" width="22" height="21" viewBox="0 0 22 21"><rect x="7.6" y="1.4" width="8" height="2.2" rx="0.6" fill="none" stroke="#fff" stroke-width="1.4"/><rect x="0.6" y="3.3" width="20.9" height="12.1" fill="#fff"/><rect x="-0.2" y="14" width="22.4" height="1.8" rx="0.5" fill="#fff"/><path d="M4.2 9.3 L7.2 11.3 L11.6 7.2 L14.6 9.5 L17.4 6.2" fill="none" stroke="#4a4d55" stroke-width="1.2"/><path d="M11 15.5 V19.3" stroke="#ccc" stroke-width="1.5"/><rect x="7.8" y="18.9" width="5.8" height="1.6" rx="0.6" fill="#ddd"/></svg>
<div class="t" style="left:72.7px;top:354.75px;font-size:25px;line-height:25px;color:#fff;">充值管理</div>
<svg style="left:39px;top:437.5px" width="22" height="21" viewBox="0 0 22 21"><rect x="7.6" y="1.4" width="8" height="2.2" rx="0.6" fill="none" stroke="#fff" stroke-width="1.4"/><rect x="0.6" y="3.3" width="20.9" height="12.1" fill="#fff"/><rect x="-0.2" y="14" width="22.4" height="1.8" rx="0.5" fill="#fff"/><path d="M4.2 9.3 L7.2 11.3 L11.6 7.2 L14.6 9.5 L17.4 6.2" fill="none" stroke="#4a4d55" stroke-width="1.2"/><path d="M11 15.5 V19.3" stroke="#ccc" stroke-width="1.5"/><rect x="7.8" y="18.9" width="5.8" height="1.6" rx="0.6" fill="#ddd"/></svg>
<div class="t" style="left:72.7px;top:435.25px;font-size:25px;line-height:25px;color:#fff;">提现管理</div>
<svg style="left:39px;top:596px" width="34" height="26" viewBox="0 0 34 26"><ellipse cx="22.4" cy="8.6" rx="4.1" ry="5.6" fill="#fff"/><path d="M19.6 11 H25.2 L25 16.5 H19.8 Z" fill="#fff"/><path d="M15 24.8 C15.5 19.5 18 17.5 21.5 16.6 H23.5 C28.5 17.4 32.3 19 32.6 24.8 Z" fill="#fff"/><g stroke="#282b33" stroke-width="1.3"><ellipse cx="12.2" cy="7" rx="4.7" ry="6.2" fill="#fff"/><path d="M0.2 24.8 C0.6 19.4 3.5 17 9 15.8 H15.5 C21 17 24 19.4 24.4 24.8 Z" fill="#fff"/></g><path d="M8.6 9 H15.8 L15.4 16.6 H9 Z" fill="#fff"/></svg>
<div class="t" style="left:82.8px;top:596.25px;font-size:25px;line-height:25px;color:#fff;">客服列表</div>
</body></html>
